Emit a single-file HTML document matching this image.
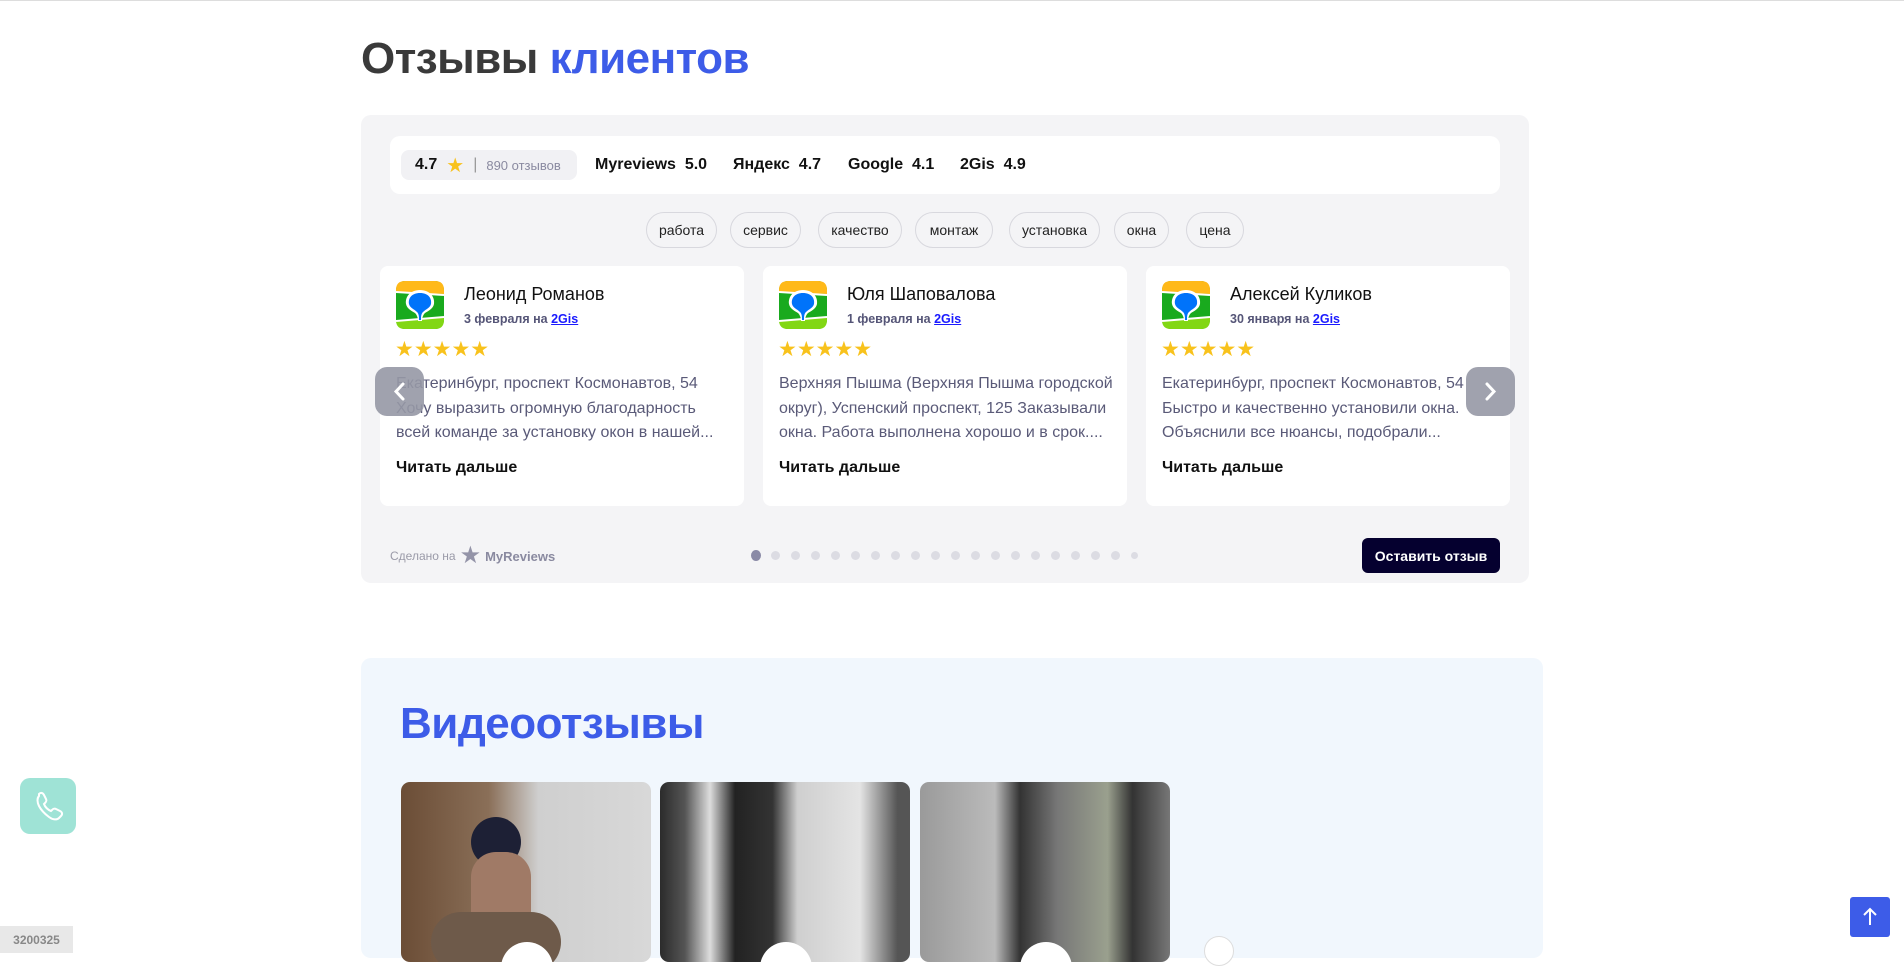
<!DOCTYPE html>
<html><head><meta charset="utf-8"><style>
*{box-sizing:border-box;margin:0;padding:0}
body{width:1904px;height:952px;overflow:hidden;background:#fff;font-family:"Liberation Sans","DejaVu Sans",sans-serif;position:relative;border-top:1px solid #ddd}
.abs{position:absolute}
h1{position:absolute;left:361px;top:33px;font-size:44px;font-weight:700;color:#3a3a3a;letter-spacing:-0.5px}
h1 span{color:#3d5ce8}
.panel{left:361px;top:114px;width:1168px;height:468px;background:#f4f4f6;border-radius:10px}
.bar{left:390px;top:135px;width:1110px;height:58px;background:#fff;border-radius:10px;font-size:16px;color:#111}
.pill{left:11px;top:14px;height:30px;width:176px;background:#f1f1f4;border-radius:8px;display:flex;align-items:center;padding-left:14px;gap:9px}
.tag{position:absolute;top:211px;height:36px;border:1px solid #d8d8de;border-radius:18px;font-size:14px;color:#222;display:flex;align-items:center;justify-content:center;background:#f4f4f6}
.card{top:265px;width:364px;height:240px;background:#fff;border-radius:8px}
.card .name{position:absolute;left:84px;top:18px;font-size:18px;color:#111}
.card .date{position:absolute;left:84px;top:46px;font-size:12.5px;color:#555577;font-weight:bold}
.card .date a{color:#1a1aff;text-decoration:underline}
.card .stars{position:absolute;left:15px;top:71px;color:#f8c21c;font-size:21px;letter-spacing:0px}
.card .txt{position:absolute;left:16px;top:106px;width:340px;font-size:16px;line-height:24.5px;color:#5a5a78;white-space:nowrap;overflow:hidden}
.card .more{position:absolute;left:16px;top:193px;font-size:16px;font-weight:bold;color:#111}
.logo{position:absolute;left:16px;top:15px}
.arrow{width:49px;height:49px;border-radius:12px;background:rgba(150,152,165,.9);top:366px}
.dot{position:absolute;top:550px;width:9px;height:9px;border-radius:50%;background:#dcdce3}
.vsec{left:361px;top:657px;width:1182px;height:300px;background:#f1f7fd;border-radius:10px}
.vid{top:781px;width:250px;height:180px;border-radius:9px;overflow:hidden}
.play{position:absolute;left:100px;top:160px;width:52px;height:52px;border-radius:50%;background:#fff}
</style></head><body>
<h1>Отзывы <span>клиентов</span></h1>
<div class="abs panel"></div>
<div class="abs bar">
 <div class="abs pill"><b>4.7</b><span style="color:#f8c21c;font-size:20px">★</span><span style="color:#999">|</span><span style="color:#8a8aa0;font-size:13px">890 отзывов</span></div>
 <div class="abs" style="left:205px;top:20px;font-weight:bold">Myreviews&nbsp;&nbsp;5.0</div>
 <div class="abs" style="left:343px;top:20px;font-weight:bold">Яндекс&nbsp;&nbsp;4.7</div>
 <div class="abs" style="left:458px;top:20px;font-weight:bold">Google&nbsp;&nbsp;4.1</div>
 <div class="abs" style="left:570px;top:20px;font-weight:bold">2Gis&nbsp;&nbsp;4.9</div>
</div>
<div class="tag" style="left:646px;width:71px">работа</div>
<div class="tag" style="left:730px;width:71px">сервис</div>
<div class="tag" style="left:818px;width:84px">качество</div>
<div class="tag" style="left:915px;width:78px">монтаж</div>
<div class="tag" style="left:1009px;width:91px">установка</div>
<div class="tag" style="left:1114px;width:55px">окна</div>
<div class="tag" style="left:1186px;width:58px">цена</div>

<svg width="0" height="0" style="position:absolute"><defs><g id="gis">
<rect width="48" height="48" rx="9" fill="#19aa1e"/>
<path d="M0 9Q0 0 9 0H39Q48 0 48 9V13L0 11Z" fill="#ffb919"/>
<path d="M0 40L48 36V39Q48 48 39 48H9Q0 48 0 39Z" fill="#82d714"/>
<path d="M0 11L48 14" stroke="#fff" stroke-width="2"/><path d="M0 40L48 36" stroke="#fff" stroke-width="2"/>
<path d="M24 9C14 9 9 16 10 23C11 28 16 30 19 32C21 34 22 37 22 40H26C26 37 27 34 29 32C32 30 37 28 38 23C39 16 34 9 24 9Z" fill="#fff"/>
<path d="M24 12C16 12 12 17 13 23C14 27 18 28 21 31C23 33 23 36 23 39H25C25 36 25 33 27 31C30 28 34 27 35 23C36 17 32 12 24 12Z" fill="#0073fa"/>
</g></defs></svg>

<div class="abs card" style="left:380px"><svg class="logo" width="48" height="48"><use href="#gis"/></svg>
<div class="name">Леонид Романов</div><div class="date">3 февраля на <a>2Gis</a></div><div class="stars">★★★★★</div>
<div class="txt">Екатеринбург, проспект Космонавтов, 54<br>Хочу выразить огромную благодарность<br>всей команде за установку окон в нашей...</div><div class="more">Читать дальше</div></div>
<div class="abs card" style="left:763px"><svg class="logo" width="48" height="48"><use href="#gis"/></svg>
<div class="name">Юля Шаповалова</div><div class="date">1 февраля на <a>2Gis</a></div><div class="stars">★★★★★</div>
<div class="txt">Верхняя Пышма (Верхняя Пышма городской<br>округ), Успенский проспект, 125 Заказывали<br>окна. Работа выполнена хорошо и в срок....</div><div class="more">Читать дальше</div></div>
<div class="abs card" style="left:1146px"><svg class="logo" width="48" height="48"><use href="#gis"/></svg>
<div class="name">Алексей Куликов</div><div class="date">30 января на <a>2Gis</a></div><div class="stars">★★★★★</div>
<div class="txt">Екатеринбург, проспект Космонавтов, 54<br>Быстро и качественно установили окна.<br>Объяснили все нюансы, подобрали...</div><div class="more">Читать дальше</div></div>

<div class="abs arrow" style="left:375px"><svg width="49" height="49"><path d="M28 17L21 24.5L28 32" stroke="#fff" stroke-width="3" fill="none" stroke-linecap="round"/></svg></div>
<div class="abs arrow" style="left:1466px"><svg width="49" height="49"><path d="M21 17L28 24.5L21 32" stroke="#fff" stroke-width="3" fill="none" stroke-linecap="round"/></svg></div>

<div class="abs" style="left:390px;top:546px;font-size:12px;color:#9a9aa8;display:flex;align-items:center;gap:4px">Сделано на <span style="color:#9494a8;font-size:24px;line-height:18px">★</span><b style="color:#8a8aa0;font-size:13px">MyReviews</b></div>
<div class="dot" style="left:751px;width:10px;height:11px;background:#8a8aa6;top:549px"></div>
<div class="dot" style="left:771px"></div><div class="dot" style="left:791px"></div><div class="dot" style="left:811px"></div><div class="dot" style="left:831px"></div><div class="dot" style="left:851px"></div><div class="dot" style="left:871px"></div><div class="dot" style="left:891px"></div><div class="dot" style="left:911px"></div><div class="dot" style="left:931px"></div><div class="dot" style="left:951px"></div><div class="dot" style="left:971px"></div><div class="dot" style="left:991px"></div><div class="dot" style="left:1011px"></div><div class="dot" style="left:1031px"></div><div class="dot" style="left:1051px"></div><div class="dot" style="left:1071px"></div><div class="dot" style="left:1091px"></div><div class="dot" style="left:1111px"></div><div class="dot" style="left:1131px;width:7px;height:7px;top:551px"></div>
<div class="abs" style="left:1362px;top:537px;width:138px;height:35px;background:#05002f;border-radius:6px;color:#fff;font-size:14px;font-weight:bold;display:flex;align-items:center;justify-content:center">Оставить отзыв</div>

<div class="abs vsec"></div>
<div class="abs" style="left:400px;top:698px;font-size:44px;font-weight:700;color:#3d5ce8;letter-spacing:-0.5px">Видеоотзывы</div>
<div class="abs vid" style="left:401px;background:linear-gradient(90deg,#6b4d36 0%,#8a6f58 35%,#cfcfcf 55%,#d8d8d8 100%)">
 <div class="abs" style="left:70px;top:35px;width:50px;height:50px;border-radius:50%;background:#1d2035"></div>
 <div class="abs" style="left:70px;top:70px;width:60px;height:110px;border-radius:25px;background:#a07a66"></div>
 <div class="abs" style="left:30px;top:130px;width:130px;height:60px;border-radius:30px;background:#6e5a4a"></div><div class="play"></div></div>
<div class="abs vid" style="left:660px;background:linear-gradient(90deg,#2b2b2b 0%,#555 10%,#ddd 20%,#222 30%,#333 45%,#cfcfcf 55%,#e4e4e4 80%,#555 95%)"><div class="play"></div></div>
<div class="abs vid" style="left:920px;background:linear-gradient(90deg,#9a9a9a 0%,#bbb 30%,#333 40%,#777 55%,#9aa08e 75%,#333 85%,#777 100%)"><div class="play"></div></div>
<div class="abs" style="left:1204px;top:935px;width:30px;height:30px;border-radius:50%;background:#fff;border:1px solid #ddd"></div>

<div class="abs" style="left:20px;top:777px;width:56px;height:56px;border-radius:10px;background:#9fe3d6"><svg width="56" height="56"><path d="M19 16c2-2 4-1 5 1l2 4c1 2 0 3-1 4l-1 1c1 3 4 6 7 7l1-1c1-1 2-2 4-1l4 2c2 1 3 3 1 5l-2 2c-2 2-6 2-10-1-4-3-8-7-10-11-2-4-2-8 0-10z" fill="none" stroke="#fff" stroke-width="2"/></svg></div>
<div class="abs" style="left:1850px;top:896px;width:40px;height:40px;background:#3d5ce8;border-radius:3px"><svg width="40" height="40"><path d="M20 28V12M14 18L20 12L26 18" stroke="#fff" stroke-width="2" fill="none"/></svg></div>
<div class="abs" style="left:0;top:925px;width:73px;height:27px;background:#e8e8e8;color:#888;font-size:12px;font-weight:bold;display:flex;align-items:center;justify-content:center">3200325</div>
</body></html>
